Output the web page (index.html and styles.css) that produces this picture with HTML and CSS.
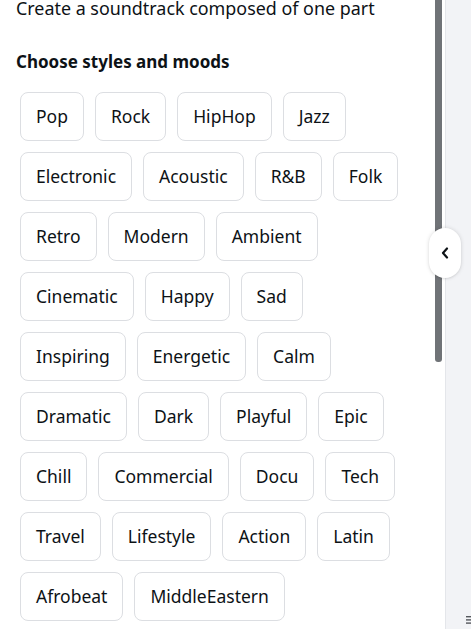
FILE: index.html
```html
<!DOCTYPE html>
<html lang="en">
<head>
<meta charset="utf-8">
<title>Soundtrack styles</title>
<link rel="stylesheet" href="styles.css">
</head>
<body>
<div class="app">
  <section class="panel">
    <div class="content">
      <p class="intro">Create a soundtrack composed of one part</p>
      <h2 class="heading">Choose styles and moods</h2>
      <div class="chips">
        <button class="chip">Pop</button>
        <button class="chip">Rock</button>
        <button class="chip">HipHop</button>
        <button class="chip">Jazz</button>
        <button class="chip">Electronic</button>
        <button class="chip">Acoustic</button>
        <button class="chip">R&amp;B</button>
        <button class="chip">Folk</button>
        <button class="chip">Retro</button>
        <button class="chip">Modern</button>
        <button class="chip">Ambient</button>
        <button class="chip">Cinematic</button>
        <button class="chip">Happy</button>
        <button class="chip">Sad</button>
        <button class="chip">Inspiring</button>
        <button class="chip">Energetic</button>
        <button class="chip">Calm</button>
        <button class="chip">Dramatic</button>
        <button class="chip">Dark</button>
        <button class="chip">Playful</button>
        <button class="chip">Epic</button>
        <button class="chip">Chill</button>
        <button class="chip">Commercial</button>
        <button class="chip">Docu</button>
        <button class="chip">Tech</button>
        <button class="chip">Travel</button>
        <button class="chip">Lifestyle</button>
        <button class="chip">Action</button>
        <button class="chip">Latin</button>
        <button class="chip">Afrobeat</button>
        <button class="chip">MiddleEastern</button>
      </div>
    </div>
    <div class="track"><div class="thumb"></div></div>
  </section>
  <aside class="side">
    <svg class="menu-icon" width="10" height="10" viewBox="0 0 10 10" aria-hidden="true">
      <rect x="0" y="0" width="10" height="1.4" fill="#55585d"/>
      <rect x="0" y="3.2" width="10" height="1.4" fill="#55585d"/>
      <rect x="0" y="6.4" width="10" height="1.4" fill="#55585d"/>
    </svg>
  </aside>
  <button class="toggle" aria-label="Collapse">
    <svg width="8" height="12" viewBox="0 0 8 12" aria-hidden="true">
      <path d="M6 1.5 L2 6 L6 10.5" fill="none" stroke="#0d1216" stroke-width="2.2" stroke-linecap="round" stroke-linejoin="round"/>
    </svg>
  </button>
</div>
</body>
</html>
```

FILE: styles.css
```css
* { box-sizing: border-box; }
html, body { margin: 0; padding: 0; }
body {
  width: 471px;
  height: 629px;
  overflow: hidden;
  background: #ffffff;
  font-family: "Noto Sans", "Open Sans", sans-serif;
  color: #0d1216;
}
.app {
  position: relative;
  display: flex;
  height: 629px;
}
.panel {
  display: flex;
  width: 446px;
  flex: none;
  background: #ffffff;
  border-right: 1px solid #e4e6ea;
}
.content {
  width: 435px;
  padding-left: 16px;
}
.intro {
  margin: -4px 0 0;
  font-size: 17.9px;
  line-height: 24px;
  white-space: nowrap;
}
.heading {
  margin: 30px 0 0;
  font-size: 17px;
  font-weight: 700;
  line-height: 24px;
}
.chips {
  margin: 18px 0 0 4px;
  width: 388px;
  display: flex;
  flex-wrap: wrap;
  gap: 11px 11px;
}
.chip {
  height: 49px;
  padding: 0 15px 2px;
  border: 1px solid #dcdee2;
  border-radius: 8px;
  background: #ffffff;
  font-family: inherit;
  font-size: 17.5px;
  color: #0d1216;
  display: flex;
  align-items: center;
  white-space: nowrap;
}
.track {
  width: 7px;
  margin-right: 3px;
}
.thumb {
  height: 362px;
  background: #707377;
  border-radius: 0 0 3px 3px;
}
.side {
  flex: 1;
  background: #f2f3f6;
  display: flex;
  flex-direction: column;
  justify-content: flex-end;
  padding: 0 0 3px 20px;
  overflow: hidden;
}
.menu-icon { display: block; flex: none; }
.toggle {
  position: absolute;
  left: 429px;
  top: 228px;
  width: 32px;
  height: 50px;
  padding: 0;
  border: none;
  border-radius: 16px;
  background: #ffffff;
  box-shadow: 0 0 4px rgba(0, 0, 0, 0.14), 0 1px 2px rgba(0, 0, 0, 0.06);
  display: flex;
  align-items: center;
  justify-content: center;
}
```
